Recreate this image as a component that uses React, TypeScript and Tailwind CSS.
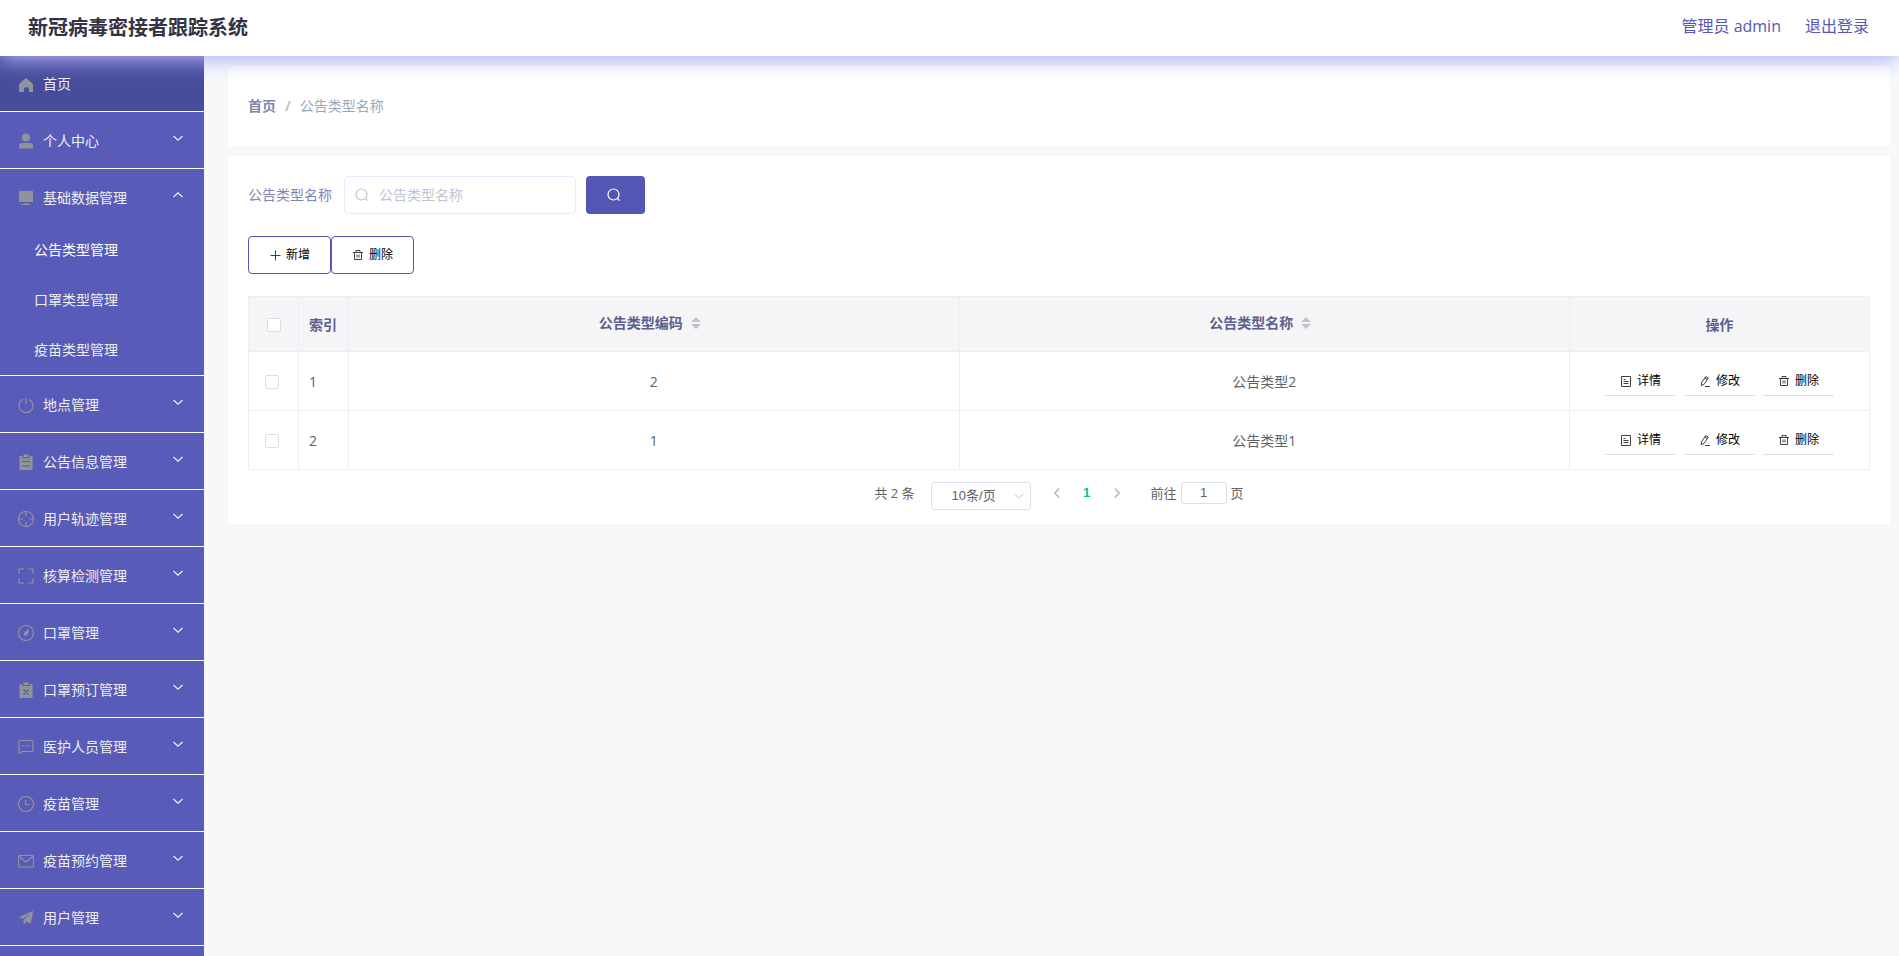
import React from "react";

type IconName =
  | "home" | "user" | "monitor" | "power" | "order" | "aim" | "full" | "compass"
  | "claim" | "chat" | "clock" | "mail" | "send";

const SANS = "font-['Open_Sans','Noto_Sans_CJK_SC',sans-serif]";
const ARIAL = "font-['Liberation_Sans','Noto_Sans_CJK_SC',sans-serif]";

function MenuIcon({ name }: { name: IconName }) {
  const shapes: Record<IconName, React.ReactNode> = {
    home: <path fill="currentColor" stroke="none" d="M1 15V7L8 1l7 6v8h-4v-4.500H6V15z" />,
    user: (
      <g fill="currentColor" stroke="none">
        <circle cx="8" cy="4.500" r="4" />
        <path d="M1 15.500V13a3 3 0 0 1 3-3h8a3 3 0 0 1 3 3v2.500z" />
      </g>
    ),
    monitor: (
      <g fill="currentColor" stroke="none">
        <path d="M1.500 1h13a.5.5 0 0 1 .5.5V12H1V1.500a.5.5 0 0 1 .5-.5z" />
        <path d="M6.500 13h3v1h3v1h-9v-1h3z" />
      </g>
    ),
    power: (
      <g>
        <path d="M8 0.500v6.500" />
        <path d="M5.200 2.200a7 7 0 1 0 5.600 0" />
      </g>
    ),
    order: (
      <g stroke="none" fill="currentColor">
        <path d="M5.500 0.500h5V2H14.500v14h-13V2h4z" />
        <path fill="#5659b5" d="M4.500 2h1v1.200h5V2h1v2.200h-7zM4 7h8v1H4zM4 11.500h8v1H4z" />
      </g>
    ),
    aim: (
      <g>
        <circle cx="8" cy="8" r="7.500" />
        <path d="M8 .5V5M8 11v4.500M.5 8H5M11 8h4.500" />
      </g>
    ),
    full: <path d="M1 5.500V1h5M10 1h5v4.500M15 10.500V15h-5M6 15H1v-4.500" />,
    compass: (
      <g>
        <circle cx="8" cy="8" r="7.500" />
        <path fill="currentColor" stroke="none" d="M11.300 3.600 9.800 9.200a2 2 0 1 1-3.200-2z" />
      </g>
    ),
    claim: (
      <g>
        <path fill="currentColor" stroke="none" d="M5.500 0.500h5V2H14.500v14h-13V2h4z" />
        <path stroke="#5659b5" d="M4.500 2v1.500h7V2M5.500 7.500l5 5M10.500 7.500l-5 5" />
      </g>
    ),
    chat: (
      <g>
        <path d="M1 14.500V2.500a1 1 0 0 1 1-1h12a1 1 0 0 1 1 1v9a1 1 0 0 1-1 1H4z" />
        <path strokeWidth="1.500" d="M4.200 7h1.500M7.200 7h1.500M10.200 7h1.500" />
      </g>
    ),
    clock: (
      <g>
        <circle cx="8" cy="8" r="7.500" />
        <path d="M7.500 4v4.500H12" />
      </g>
    ),
    mail: (
      <g>
        <rect x=".5" y="2.500" width="15" height="11.500" rx="1" />
        <path d="m1 3 5.500 5a2 2 0 0 0 3 0L15 3" />
      </g>
    ),
    send: <path fill="currentColor" stroke="none" d="M15.200.8.8 7.200l3.800 1.900L12 3.800 5.600 10v5.200l2.600-3.600 4.500 2.200z" />,
  };
  return (
    <svg viewBox="0 0 16 16" className="size-4 shrink-0 text-[#909399]" fill="none" stroke="currentColor" strokeWidth="1.200" aria-hidden="true">
      {shapes[name]}
    </svg>
  );
}

function Chevron({ dir, className }: { dir: "up" | "down" | "left" | "right"; className: string }) {
  const paths = {
    up: "M1.500 8 6 3.800 10.500 8",
    down: "M1.500 4 6 8.200 10.500 4",
    left: "M8.200 1.500 3.800 6l4.400 4.500",
    right: "M3.800 1.500 8.200 6l-4.400 4.500",
  };
  return (
    <svg viewBox="0 0 12 12" className={className} fill="none" stroke="currentColor" aria-hidden="true">
      <path d={paths[dir]} />
    </svg>
  );
}

function SearchIcon() {
  return (
    <svg viewBox="0 0 14 14" className="size-3.5 shrink-0" fill="none" stroke="currentColor" strokeWidth="1.200" aria-hidden="true">
      <circle cx="6.500" cy="6.500" r="5.500" />
      <path d="m10.500 10.500 2.200 2.200" />
    </svg>
  );
}

function ActionIcon({ name }: { name: "plus" | "delete" | "document" | "edit" }) {
  const shapes = {
    plus: <path d="M6.500 1.500v10M1.500 6.500h10" />,
    delete: <path d="M1 3.500h10M4 3.500v-2h4v2M2.500 3.500v7h7v-7M5 5.500v3M7 5.500v3" />,
    document: <path d="M1.500 1.500h9v10h-9zM3.500 4.500h2M3.500 6.500h5M3.500 8.500h5" />,
    edit: <path d="M6.800 1.500 9.300 3 5.200 9.300 2.300 10.700 2.500 7.800zM5.800 3l2.600 1.600M6 11.500h5" />,
  };
  return (
    <svg viewBox="0 0 12 12" className="size-3 shrink-0 text-[#404040]" fill="none" stroke="currentColor" strokeWidth="1" aria-hidden="true">
      {shapes[name]}
    </svg>
  );
}

const MENU: { label: string; icon: IconName; children?: string[] }[] = [
  { label: "个人中心", icon: "user" },
  { label: "基础数据管理", icon: "monitor", children: ["公告类型管理", "口罩类型管理", "疫苗类型管理"] },
  { label: "地点管理", icon: "power" },
  { label: "公告信息管理", icon: "order" },
  { label: "用户轨迹管理", icon: "aim" },
  { label: "核算检测管理", icon: "full" },
  { label: "口罩管理", icon: "compass" },
  { label: "口罩预订管理", icon: "claim" },
  { label: "医护人员管理", icon: "chat" },
  { label: "疫苗管理", icon: "clock" },
  { label: "疫苗预约管理", icon: "mail" },
  { label: "用户管理", icon: "send" },
];

const ROWS = [
  { index: 1, code: "2", name: "公告类型2" },
  { index: 2, code: "1", name: "公告类型1" },
];

const CHECKBOX = "block size-3.5 appearance-none rounded-xs border border-[#dcdfe6] bg-white checked:bg-[#5456b4]";
const CELL = "border border-[#ebeef5]";

function Sidebar() {
  return (
    <nav className="w-51 shrink-0 overflow-hidden bg-[#585bb7] text-sm text-[#eeeeee]">
      <a href="#home" className="flex h-14 items-center gap-[9px] border-b border-white bg-[#484c9c] pl-4.5">
        <span className="flex pt-0.5"><MenuIcon name="home" /></span>
        首页
      </a>
      <ul>
        {MENU.map((item) => (
          <li key={item.label} className="border-b border-white">
            <button type="button" className="flex h-14 w-full items-center gap-[9px] pr-5 pl-4.5 text-left">
              <span className="flex pt-0.5"><MenuIcon name={item.icon} /></span>
              <span className="flex-1 pt-0.5">{item.label}</span>
              <span className="flex pb-1">
                <Chevron dir={item.children ? "up" : "down"} className="size-3 stroke-[1.3]" />
              </span>
            </button>
            {item.children && (
              <ul>
                {item.children.map((child, i) => (
                  <li key={child}>
                    <a href="#types" className={i === 0 ? "flex h-12.5 items-center pl-8.5 text-white" : "flex h-12.5 items-center pl-8.5"}>
                      {child}
                    </a>
                  </li>
                ))}
              </ul>
            )}
          </li>
        ))}
      </ul>
    </nav>
  );
}

function SortHeader({ label }: { label: string }) {
  return (
    <th className={`${CELL} pr-2 font-bold`}>
      <button type="button" className="inline-flex items-center gap-2 pb-0.5 align-middle">
        {label}
        <svg viewBox="0 0 10 12" className="h-3 w-2.5 text-[#c0c4cc]" fill="currentColor" aria-hidden="true">
          <path d="M5 0l5 5H0zM0 7h10l-5 5z" />
        </svg>
      </button>
    </th>
  );
}

function RowAction({ icon, label }: { icon: "document" | "edit" | "delete"; label: string }) {
  return (
    <button type="button" className="flex h-7.5 w-[71px] items-center justify-center gap-[5px] border-b border-[#dcdfe6] text-xs text-black">
      <ActionIcon name={icon} />
      {label}
    </button>
  );
}

function TypeTable() {
  return (
    <table className="w-full table-fixed border-collapse text-sm text-[#606266]">
      <colgroup>
        <col className="w-12.5" />
        <col className="w-12.5" />
        <col />
        <col />
        <col className="w-75" />
      </colgroup>
      <thead className="bg-[#f5f5f8] text-[#5c5f8d]">
        <tr className="h-[55px]">
          <th className={`${CELL} pt-0.5 pl-4.5`}>
            <input type="checkbox" aria-label="全选" className={CHECKBOX} />
          </th>
          <th className={`${CELL} pt-0.5 pl-2.5 text-left font-bold`}>索引</th>
          <SortHeader label="公告类型编码" />
          <SortHeader label="公告类型名称" />
          <th className={`${CELL} pt-0.5 font-bold`}>操作</th>
        </tr>
      </thead>
      <tbody>
        {ROWS.map((row) => (
          <tr key={row.index} className="h-[59px]">
            <td className={`${CELL} pt-0.5 pl-4`}>
              <input type="checkbox" aria-label={row.name} className={CHECKBOX} />
            </td>
            <td className={`${CELL} pt-0.5 pl-2.5`}>{row.index}</td>
            <td className={`${CELL} pt-0.5 text-center`}>{row.code}</td>
            <td className={`${CELL} pt-0.5 text-center`}>{row.name}</td>
            <td className={CELL}>
              <div className="flex justify-center gap-2">
                <RowAction icon="document" label="详情" />
                <RowAction icon="edit" label="修改" />
                <RowAction icon="delete" label="删除" />
              </div>
            </td>
          </tr>
        ))}
      </tbody>
    </table>
  );
}

function Pagination() {
  return (
    <div className="mt-3 flex items-start justify-center text-[13px] leading-[22px] text-[#606266]">
      <span>共 2 条</span>
      <div className="relative ml-4">
        <select aria-label="每页条数" className={`${ARIAL} h-7 w-25 appearance-none rounded-[3px] border border-[#dcdfe6] bg-white pr-3 pl-5`}>
          <option>10条/页</option>
        </select>
        <Chevron dir="down" className="pointer-events-none absolute top-2 right-1.5 size-3 text-[#c0c4cc]" />
      </div>
      <button type="button" aria-label="上一页" className="ml-5 flex h-[22px] items-center text-[#b4b8c0]">
        <Chevron dir="left" className="size-3 stroke-[1.5]" />
      </button>
      <button type="button" className={`${ARIAL} w-12 font-bold text-[#00c292]`}>1</button>
      <button type="button" aria-label="下一页" className="mr-7 flex h-[22px] items-center text-[#b4b8c0]">
        <Chevron dir="right" className="size-3 stroke-[1.5]" />
      </button>
      <label className="flex items-start">
        前往
        <input defaultValue="1" className={`${ARIAL} mx-1 h-[22px] w-[46px] rounded-[3px] border border-[#dcdfe6] text-center`} />
        页
      </label>
    </div>
  );
}

export default function App() {
  return (
    <div className={`${SANS} flex h-screen flex-col overflow-hidden bg-[#f6f8fa]`}>
      <header className="z-10 flex h-14 shrink-0 items-center justify-between bg-white pr-7.5 pl-7 shadow-[0_4px_20px_#b1b1ff]">
        <h1 className="text-xl font-bold text-[#333344]">新冠病毒密接者跟踪系统</h1>
        <div className="flex gap-6 pb-1 text-base text-[#5659b5]">
          <span>管理员 admin</span>
          <a href="#logout">退出登录</a>
        </div>
      </header>
      <div className="flex min-h-0 flex-1">
        <Sidebar />
        <main className="min-w-0 flex-1 py-2.5 pr-[9px] pl-6">
          <nav aria-label="breadcrumb" className="flex h-20 items-center gap-[9px] bg-white px-5 text-sm text-[#97a8be]">
            <a href="#home" className="font-bold text-[#8087a8]">首页</a>
            <span className="font-bold text-[#c0c4cc]">/</span>
            <span>公告类型名称</span>
          </nav>
          <section className="mt-2.5 bg-white px-5 pt-5 pb-3.5">
            <form className="flex items-center text-sm" onSubmit={(e) => e.preventDefault()}>
              <label htmlFor="type-name" className="text-[#8086b4]">公告类型名称</label>
              <div className="ml-3 flex h-[38px] w-58 items-center gap-2.5 rounded border border-[#e9e9fc] pl-2.5 text-[#c0c4cc]">
                <SearchIcon />
                <input id="type-name" placeholder="公告类型名称" className="min-w-0 flex-1 text-[#606266] outline-none placeholder:text-[#c0c4cc]" />
              </div>
              <button type="submit" aria-label="查询" className="ml-2.5 flex h-[38px] w-[59px] items-center justify-center rounded bg-[#5456b4] pr-1 text-white">
                <SearchIcon />
              </button>
            </form>
            <div className="mt-5.5 mb-5.5 flex text-xs text-black">
              <button type="button" className="flex h-[38px] w-[83px] items-center justify-center gap-[5px] rounded border border-[#5456b4]">
                <ActionIcon name="plus" />
                新增
              </button>
              <button type="button" className="flex h-[38px] w-[83px] items-center justify-center gap-[5px] rounded border border-[#5456b4]">
                <ActionIcon name="delete" />
                删除
              </button>
            </div>
            <TypeTable />
            <Pagination />
          </section>
        </main>
      </div>
    </div>
  );
}
